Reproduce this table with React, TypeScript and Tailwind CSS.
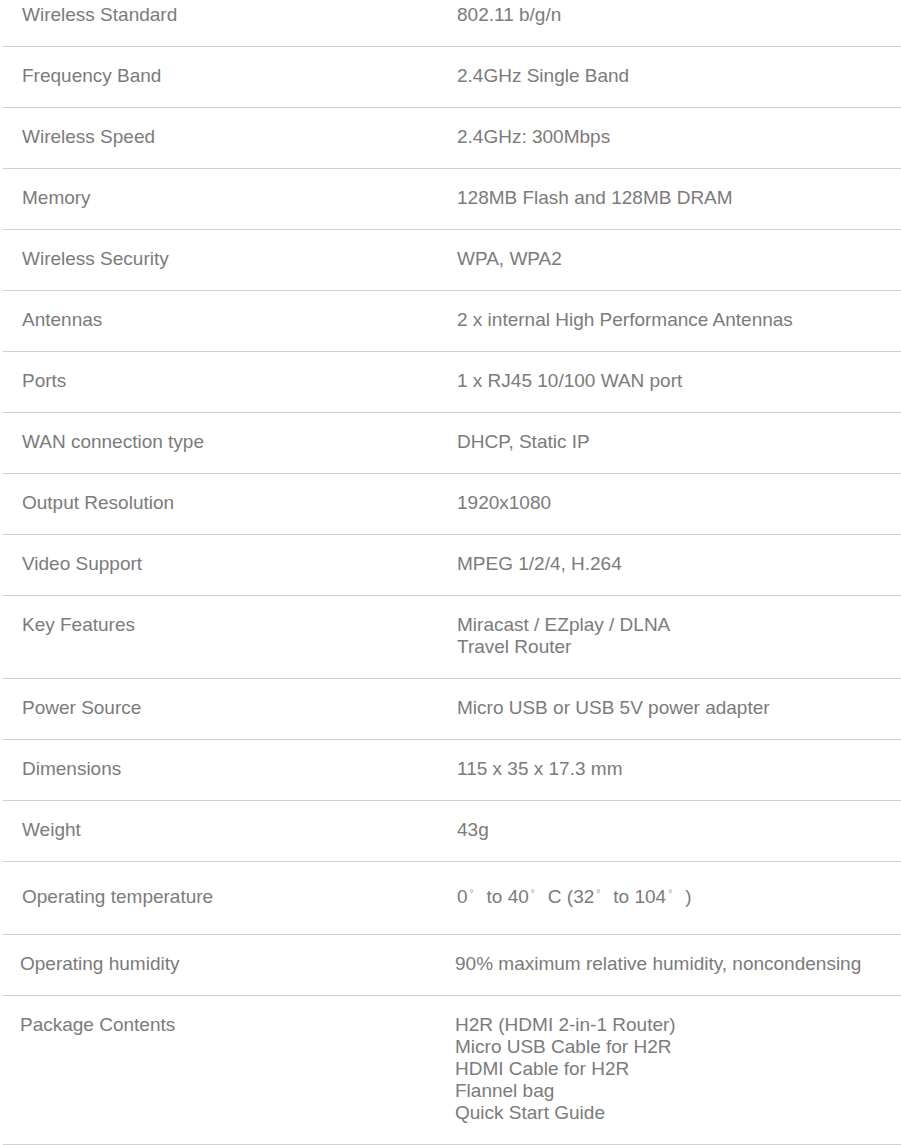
import React from "react";

type Row = { label: string; value: React.ReactNode; cls?: string; shift?: boolean };

const Deg = () => (
  <span className="relative top-[-6px] mr-[13px] ml-[2px] text-[10px] leading-none text-[#9a9a9a]">°</span>
);

const rows: Row[] = [
  { label: "Wireless Standard", value: "802.11 b/g/n" },
  { label: "Frequency Band", value: "2.4GHz Single Band" },
  { label: "Wireless Speed", value: "2.4GHz: 300Mbps" },
  { label: "Memory", value: "128MB Flash and 128MB DRAM" },
  { label: "Wireless Security", value: "WPA, WPA2" },
  { label: "Antennas", value: "2 x internal High Performance Antennas" },
  { label: "Ports", value: "1 x RJ45 10/100 WAN port" },
  { label: "WAN connection type", value: "DHCP, Static IP" },
  { label: "Output Resolution", value: "1920x1080" },
  { label: "Video Support", value: "MPEG 1/2/4, H.264" },
  {
    label: "Key Features",
    value: (
      <>
        Miracast / EZplay / DLNA
        <br />
        Travel Router
      </>
    ),
  },
  { label: "Power Source", value: "Micro USB or USB 5V power adapter" },
  { label: "Dimensions", value: "115 x 35 x 17.3 mm" },
  { label: "Weight", value: "43g" },
  {
    label: "Operating temperature",
    value: (
      <>
        0<Deg />to 40<Deg />C (32<Deg />to 104<Deg />)
      </>
    ),
    cls: "pt-[24px] pb-[26px]",
  },
  { label: "Operating humidity", value: "90% maximum relative humidity, noncondensing", shift: true },
  {
    label: "Package Contents",
    value: (
      <>
        H2R (HDMI 2-in-1 Router)
        <br />
        Micro USB Cable for H2R
        <br />
        HDMI Cable for H2R
        <br />
        Flannel bag
        <br />
        Quick Start Guide
      </>
    ),
    shift: true,
  },
];

export default function App() {
  return (
    <div
      className="bg-white w-[901px] h-[1145px] overflow-hidden text-[#7b7b7b] text-[19px] leading-[22px]"
      style={{ fontFamily: '"Liberation Sans", Arial, sans-serif' }}
    >
      <div className="mt-[-14px] ml-[3px]">
        {rows.map((r, i) => (
          <div
            key={i}
            className={`flex border-b border-[#d2d2d2] ${r.cls ?? "pt-[18px] pb-[20px]"} ${
              r.shift ? "pl-[17px]" : "pl-[19px]"
            }`}
          >
            <div className="w-[435px] shrink-0">{r.label}</div>
            <div>{r.value}</div>
          </div>
        ))}
      </div>
    </div>
  );
}
